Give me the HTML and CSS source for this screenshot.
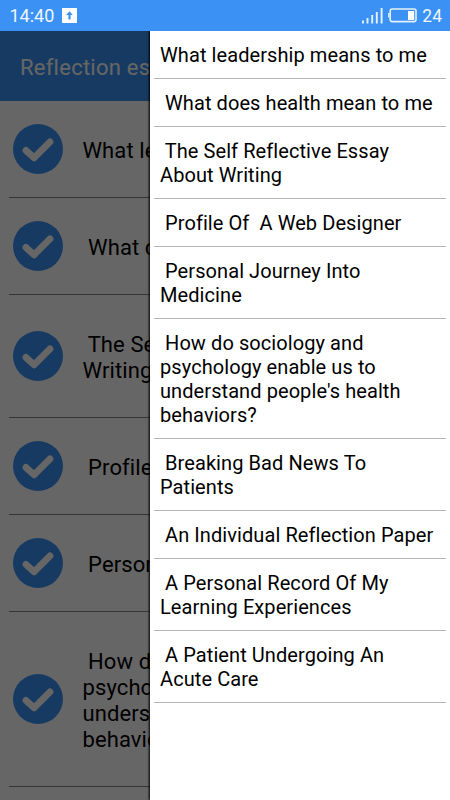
FILE: index.html
```
<!DOCTYPE html>
<html lang="en">
<head>
<meta charset="utf-8">
<title>Reflection essays</title>
<link rel="stylesheet" href="styles.css">
</head>
<body>
<svg class="defs" width="0" height="0">
  <symbol id="check" viewBox="0 0 50 50">
    <circle cx="25" cy="25" r="25" fill="#3b92f4"/>
    <path d="M13 26.4 L21 33.8 L37 17.8" fill="none" stroke="#fff" stroke-width="6.8" stroke-linecap="round" stroke-linejoin="round"/>
  </symbol>
</svg>
<header class="status">
  <span class="time">14:40</span>
  <svg class="upload" viewBox="0 0 15 15"><rect width="15" height="15" fill="#fff"/><path d="M7.5 3.2 L10.8 7 H8.6 V11.5 H6.4 V7 H4.2 Z" fill="#3b92f4"/></svg>
  <svg class="signal" viewBox="0 0 21 16"><path d="M1 12.5V15.5M5.5 10V15.5M10.2 7V15.5M14.8 4V15.5M19.6 0V15.5" stroke="#e4f1ff" stroke-width="1.9" fill="none"/></svg>
  <svg class="battery" viewBox="0 0 29 15"><rect x="2.2" y="1" width="25.8" height="12.6" rx="2" fill="none" stroke="#e4f1ff" stroke-width="1.6"/><path d="M.8 5V9.5" stroke="#e4f1ff" stroke-width="1.4"/><rect x="20" y="3" width="6.2" height="9" fill="#fff"/></svg>
  <span class="level">24</span>
</header>
<main class="screen">
  <section class="page">
    <h1 class="title">Reflection essays</h1>
    <ul class="essays">
      <li><svg><use href="#check"/></svg><p>What leadership means to me</p></li>
      <li><svg><use href="#check"/></svg><p> What does health mean to me</p></li>
      <li><svg><use href="#check"/></svg><p> The Self Reflective Essay About
Writing</p></li>
      <li><svg><use href="#check"/></svg><p> Profile Of  A Web Designer</p></li>
      <li><svg><use href="#check"/></svg><p> Personal Journey Into Medicine</p></li>
      <li><svg><use href="#check"/></svg><p> How do sociology and
psychology enable us to
understand people's health
behaviors?</p></li>
    </ul>
  </section>
  <div class="scrim"></div>
  <nav class="drawer">
    <ul>
      <li>What leadership means to me</li>
      <li> What does health mean to me</li>
      <li> The Self Reflective Essay
About Writing</li>
      <li> Profile Of  A Web Designer</li>
      <li> Personal Journey Into
Medicine</li>
      <li> How do sociology and
psychology enable us to
understand people's health
behaviors?</li>
      <li> Breaking Bad News To
Patients</li>
      <li> An Individual Reflection Paper</li>
      <li> A Personal Record Of My
Learning Experiences</li>
      <li> A Patient Undergoing An
Acute Care</li>
    </ul>
  </nav>
</main>
</body>
</html>
```
FILE: styles.css
```
* { box-sizing: border-box; margin: 0; padding: 0; }
body {
  width: 450px;
  height: 800px;
  overflow: hidden;
  display: flex;
  flex-direction: column;
  font-family: Roboto, "Liberation Sans", sans-serif;
  color: #000;
  background: #fff;
}
ul { list-style: none; }
.defs { position: absolute; }

.status {
  height: 31px;
  flex: none;
  display: flex;
  align-items: center;
  padding: 0 8px 0 9.5px;
  background: #3b92f4;
  color: #eef6ff;
  font-size: 18px;
}
.time { width: 52px; }
.upload { width: 15px; height: 15px; }
.signal { width: 21px; height: 16px; margin-left: auto; }
.battery { width: 29px; height: 15px; margin: 0 5px 0 5px; }
.level { font-size: 17.5px; }

.screen { position: relative; flex: 1; overflow: hidden; }
.page { height: 100%; overflow: hidden; }
.title {
  height: 70px;
  padding-left: 20px;
  background: #3b92f4;
  color: #fff;
  font-size: 22px;
  font-weight: 400;
  line-height: 73px;
  letter-spacing: .25px;
}
.essays { padding: 0 9px; }
.essays li {
  display: flex;
  align-items: center;
  padding: 35px 0;
  border-bottom: 1px solid #888;
}
.essays svg { width: 50px; height: 50px; margin: -13px 20px -12px 3.5px; flex: none; }
.essays p {
  position: relative;
  top: 2px;
  font-size: 22px;
  line-height: 26px;
  letter-spacing: .1px;
  white-space: pre;
}
.scrim { position: absolute; inset: 0; background: rgba(0, 0, 0, .6); }
.drawer {
  position: absolute;
  top: 0;
  right: 0;
  bottom: 0;
  width: 300px;
  padding: 0 4px;
  background: #fff;
  box-shadow: -1px 0 2px #000;
}
.drawer li {
  padding: 12px 6px 11px 6px;
  border-bottom: 1px solid #b5b5b5;
  font-size: 20px;
  line-height: 24px;
  letter-spacing: .08px;
  white-space: pre;
}
```
